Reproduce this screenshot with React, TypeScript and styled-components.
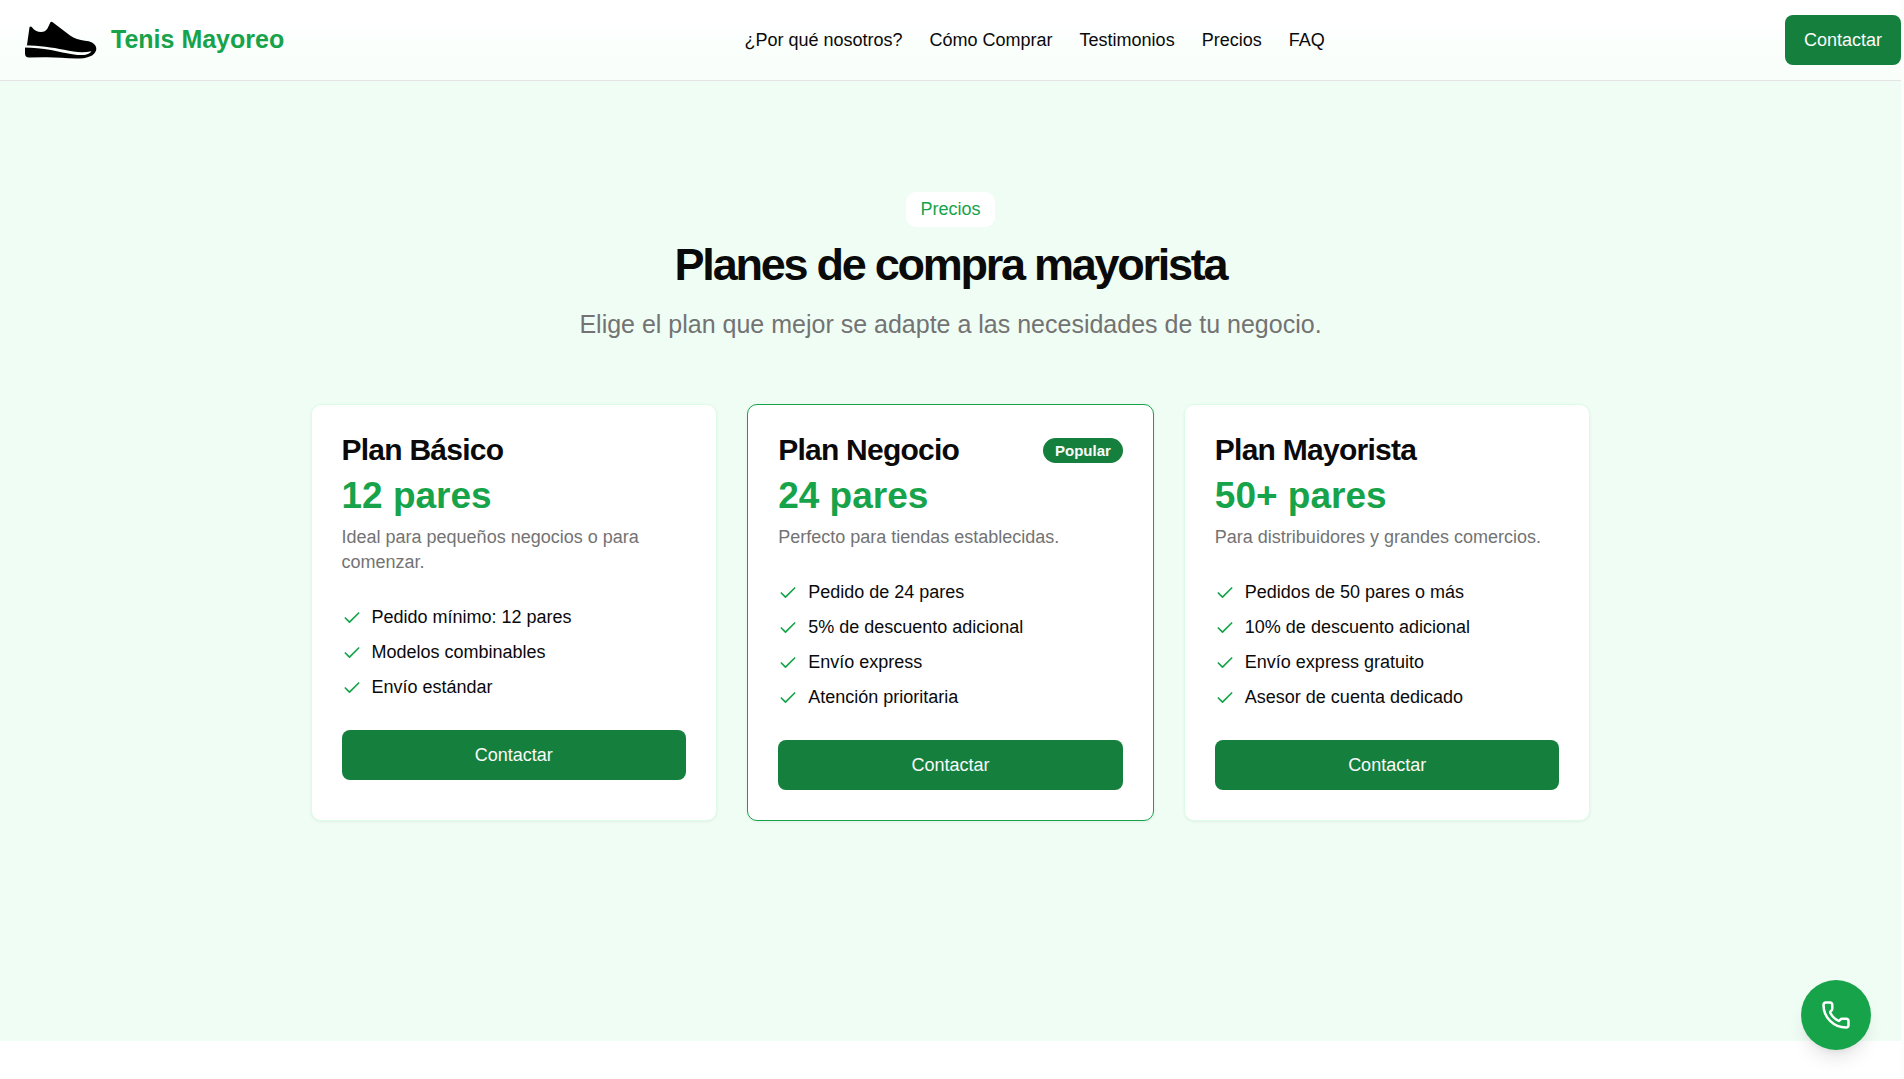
import React from "react";
import styled, { createGlobalStyle, css } from "styled-components";
import { Check, Phone } from "lucide-react";

const Global = createGlobalStyle`
  *, *::before, *::after { box-sizing: border-box; }
  body {
    margin: 0;
    background: #ffffff;
    color: #0a0a0a;
    font-family: "Liberation Sans", Arial, Helvetica, sans-serif;
    font-size: 18px;
    line-height: 25px;
  }
  h1, h2, h3, p, ul { margin: 0; padding: 0; }
  a { color: inherit; text-decoration: none; }
`;

const Page = styled.div`
  min-height: 100vh;
  border-right: 3px solid #fcfcfc;
`;

const Header = styled.header`
  position: sticky;
  top: 0;
  z-index: 2;
  display: flex;
  align-items: center;
  justify-content: space-between;
  height: 81px;
  border-bottom: 1px solid #e5e5e5;
  background: linear-gradient(#ffffff 22px, #fafffc 44px, #f9fefb);
`;

const Brand = styled.a`
  display: flex;
  align-items: center;
  gap: 14px;
  padding-left: 24px;
  color: #16a34a;
  font-size: 25px;
  font-weight: 700;
  line-height: 35px;
`;

const BrandName = styled.span`
  padding-bottom: 2px;
`;

const Nav = styled.nav`
  display: flex;
  gap: 27px;
`;

const buttonLook = css`
  height: 50px;
  border: 0;
  border-radius: 8px;
  background: #15803d;
  color: #fafafa;
  font: inherit;
  cursor: pointer;
  &:hover { background: #166534; }
`;

const HeaderButton = styled.button`
  ${buttonLook}
  padding: 0 19px;
`;

const CardButton = styled.button`
  ${buttonLook}
  width: 100%;
`;

const Pricing = styled.section`
  padding: 111px 20px 220px;
  background: #f0fdf4;
`;

const Intro = styled.div`
  display: flex;
  flex-direction: column;
  align-items: center;
  gap: 10px;
  margin-bottom: 59px;
  text-align: center;
`;

const Tag = styled.div`
  padding: 5px 14px;
  border-radius: 10px;
  background: #ffffff;
  color: #16a34a;
`;

const Title = styled.h2`
  font-size: 45px;
  line-height: 56px;
  letter-spacing: -0.05em;
`;

const Lead = styled.p`
  color: #737373;
  font-size: 25px;
  line-height: 42px;
`;

const Plans = styled.div`
  display: grid;
  grid-template-columns: repeat(3, 1fr);
  align-items: stretch;
  gap: 30px;
  max-width: 1280px;
  margin: 0 auto;
`;

const Card = styled.article<{ $popular?: boolean }>`
  padding: 30px;
  border: 1px solid ${(p) => (p.$popular ? "#16a34a" : "#dcfce7")};
  border-radius: 10px;
  background: #ffffff;
  box-shadow: 0 1px 3px rgba(0, 0, 0, 0.06);
`;

const CardTop = styled.div`
  display: flex;
  align-items: center;
  justify-content: space-between;
`;

const PlanName = styled.h3`
  font-size: 30px;
  line-height: 30px;
  letter-spacing: -0.025em;
`;

const Popular = styled.span`
  padding: 0 12px;
  border-radius: 13px;
  background: #15803d;
  color: #fafafa;
  font-size: 15px;
  font-weight: 700;
  line-height: 25px;
`;

const Amount = styled.p`
  margin: 8px 0 7px;
  color: #16a34a;
  font-size: 37px;
  font-weight: 700;
  line-height: 45px;
`;

const Description = styled.p`
  color: #737373;
`;

const Features = styled.ul`
  display: grid;
  gap: 10px;
  margin: 30px 0;
  list-style: none;
`;

const Feature = styled.li`
  display: flex;
  align-items: center;
  gap: 10px;
  svg { color: #16a34a; flex: none; }
`;

const CallButton = styled.button`
  position: fixed;
  right: 33px;
  bottom: 29px;
  z-index: 3;
  display: grid;
  place-items: center;
  width: 70px;
  height: 70px;
  padding: 0;
  border: 0;
  border-radius: 50%;
  background: #16a34a;
  color: #ffffff;
  box-shadow: 0 12px 18px -4px rgba(0, 0, 0, 0.1), 0 5px 8px -5px rgba(0, 0, 0, 0.1);
  cursor: pointer;
`;

function ShoeLogo() {
  return (
    <svg width="73" height="40" viewBox="0 0 73 40" aria-hidden="true">
      <path d="M5.500 7.300Q6.300 5.800 8 7.200C11 12 20 14.500 23.500 8.500L26.300 2.500Q27.300 0.800 29 2.500L39.500 10.500C44 14 48 17.500 53 19C58 20.800 64 20.500 68 22.500Q72.600 25 72.300 29.500C71 36.500 62 38.700 52 38.600C41 38.300 30 37 20 37.300L5 37.500Q1 37.300 1 33.500V27.500L3 25Z" />
      <path
        d="M0 25.200C16 25.800 28 27.200 40 29.800C51 32.300 59 33 67.500 31.200C65 35 58 35.800 50 34.600C42 33.400 35 31.500 27 30C18 28.500 9 27.800 0 27.600Z"
        fill="#fafffc"
      />
    </svg>
  );
}

const links = ["¿Por qué nosotros?", "Cómo Comprar", "Testimonios", "Precios", "FAQ"];

const plans = [
  {
    name: "Plan Básico",
    amount: "12 pares",
    description: "Ideal para pequeños negocios o para comenzar.",
    features: ["Pedido mínimo: 12 pares", "Modelos combinables", "Envío estándar"],
  },
  {
    name: "Plan Negocio",
    amount: "24 pares",
    popular: true,
    description: "Perfecto para tiendas establecidas.",
    features: ["Pedido de 24 pares", "5% de descuento adicional", "Envío express", "Atención prioritaria"],
  },
  {
    name: "Plan Mayorista",
    amount: "50+ pares",
    description: "Para distribuidores y grandes comercios.",
    features: ["Pedidos de 50 pares o más", "10% de descuento adicional", "Envío express gratuito", "Asesor de cuenta dedicado"],
  },
];

export default function App() {
  return (
    <>
      <Global />
      <Page>
        <Header>
          <Brand href="#inicio">
            <ShoeLogo />
            <BrandName>Tenis Mayoreo</BrandName>
          </Brand>
          <Nav>
            {links.map((link) => (
              <a key={link} href="#seccion">{link}</a>
            ))}
          </Nav>
          <HeaderButton type="button">Contactar</HeaderButton>
        </Header>
        <Pricing>
          <Intro>
            <Tag>Precios</Tag>
            <Title>Planes de compra mayorista</Title>
            <Lead>Elige el plan que mejor se adapte a las necesidades de tu negocio.</Lead>
          </Intro>
          <Plans>
            {plans.map((plan) => (
              <Card key={plan.name} $popular={plan.popular}>
                <CardTop>
                  <PlanName>{plan.name}</PlanName>
                  {plan.popular && <Popular>Popular</Popular>}
                </CardTop>
                <Amount>{plan.amount}</Amount>
                <Description>{plan.description}</Description>
                <Features>
                  {plan.features.map((feature) => (
                    <Feature key={feature}>
                      <Check size={20} strokeWidth={2} />
                      {feature}
                    </Feature>
                  ))}
                </Features>
                <CardButton type="button">Contactar</CardButton>
              </Card>
            ))}
          </Plans>
        </Pricing>
      </Page>
      <CallButton type="button" aria-label="Llamar">
        <Phone size={30} />
      </CallButton>
    </>
  );
}
